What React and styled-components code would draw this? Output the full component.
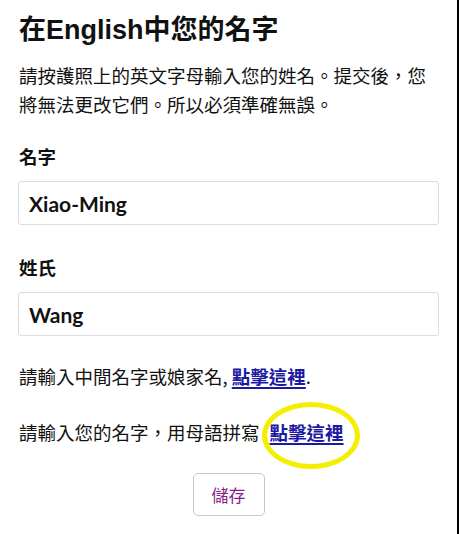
import React from "react";
import styled, { createGlobalStyle } from "styled-components";

const Global = createGlobalStyle`
  html, body { margin: 0; padding: 0; background: #fff; }
  body { font-family: "Noto Sans CJK TC", "Noto Sans", sans-serif; color: #111; }
`;

const Page = styled.div`
  box-sizing: border-box;
  width: 459px;
  min-height: 534px;
  border-right: 2px solid #000;
  padding: 10px 18px 16px 18px;
  display: flex;
  flex-direction: column;
`;

const Title = styled.h1`
  margin: 0;
  font-family: "Liberation Sans", "Noto Sans CJK TC", sans-serif;
  font-size: 27px;
  line-height: 40px;
  font-weight: 700;
  color: #111;
  padding-left: 1px;
`;

const Intro = styled.p`
  margin: 11px 0 0 1px;
  font-size: 18.5px;
  line-height: 29px;
  color: #111;
`;

const Label = styled.div`
  margin: ${(p) => p.$top}px 0 0 1px;
  font-size: 18.5px;
  line-height: 26px;
  font-weight: 700;
  color: #111;
`;

const Field = styled.div`
  box-sizing: border-box;
  margin-top: 12px;
  height: 44px;
  border: 1px solid #dcdcdc;
  border-radius: 3px;
  padding: 0 10px;
  display: flex;
  align-items: center;
  font-family: "Lato", "Noto Sans", sans-serif;
  font-weight: 700;
  font-size: 21px;
  color: #111;
`;

const Line = styled.p`
  margin: ${(p) => p.$top}px 0 0 1px;
  font-size: 18.5px;
  line-height: 28px;
  color: #111;
  white-space: nowrap;
`;

const Link = styled.a`
  color: #1c1aa3;
  font-weight: 700;
  text-decoration: underline;
  text-underline-offset: 3px;
  text-decoration-thickness: 1.5px;
`;

const Circled = styled.span`
  position: relative;
  display: inline-block;
  margin-left: 10px;
`;

const Ring = styled.span`
  position: absolute;
  left: -8px;
  top: -16px;
  width: 98px;
  height: 67px;
  box-sizing: border-box;
  border: 5px solid #f4ee00;
  border-radius: 50%;
  pointer-events: none;
`;

const ButtonRow = styled.div`
  display: flex;
  justify-content: center;
  margin-top: 27px;
`;

const SaveButton = styled.button`
  box-sizing: border-box;
  width: 72px;
  height: 43px;
  background: #fff;
  border: 1px solid #c8c8c8;
  border-radius: 5px;
  font-family: "Noto Sans CJK TC", sans-serif;
  font-size: 17px;
  color: #8a1f8a;
  padding: 0;
`;

export default function App() {
  return (
    <>
      <Global />
      <Page>
        <Title>在English中您的名字</Title>
        <Intro>
          請按護照上的英文字母輸入您的姓名。提交後，您
          <br />
          將無法更改它們。所以必須準確無誤。
        </Intro>
        <Label $top={24}>名字</Label>
        <Field>Xiao-Ming</Field>
        <Label $top={29}>姓氏</Label>
        <Field>Wang</Field>
        <Line $top={26}>
          請輸入中間名字或娘家名, <Link href="#">點擊這裡</Link>.
        </Line>
        <Line $top={28}>
          請輸入您的名字，用母語拼寫
          <Circled>
            <Link href="#">點擊這裡</Link>
            <Ring />
          </Circled>
        </Line>
        <ButtonRow>
          <SaveButton>儲存</SaveButton>
        </ButtonRow>
      </Page>
    </>
  );
}
